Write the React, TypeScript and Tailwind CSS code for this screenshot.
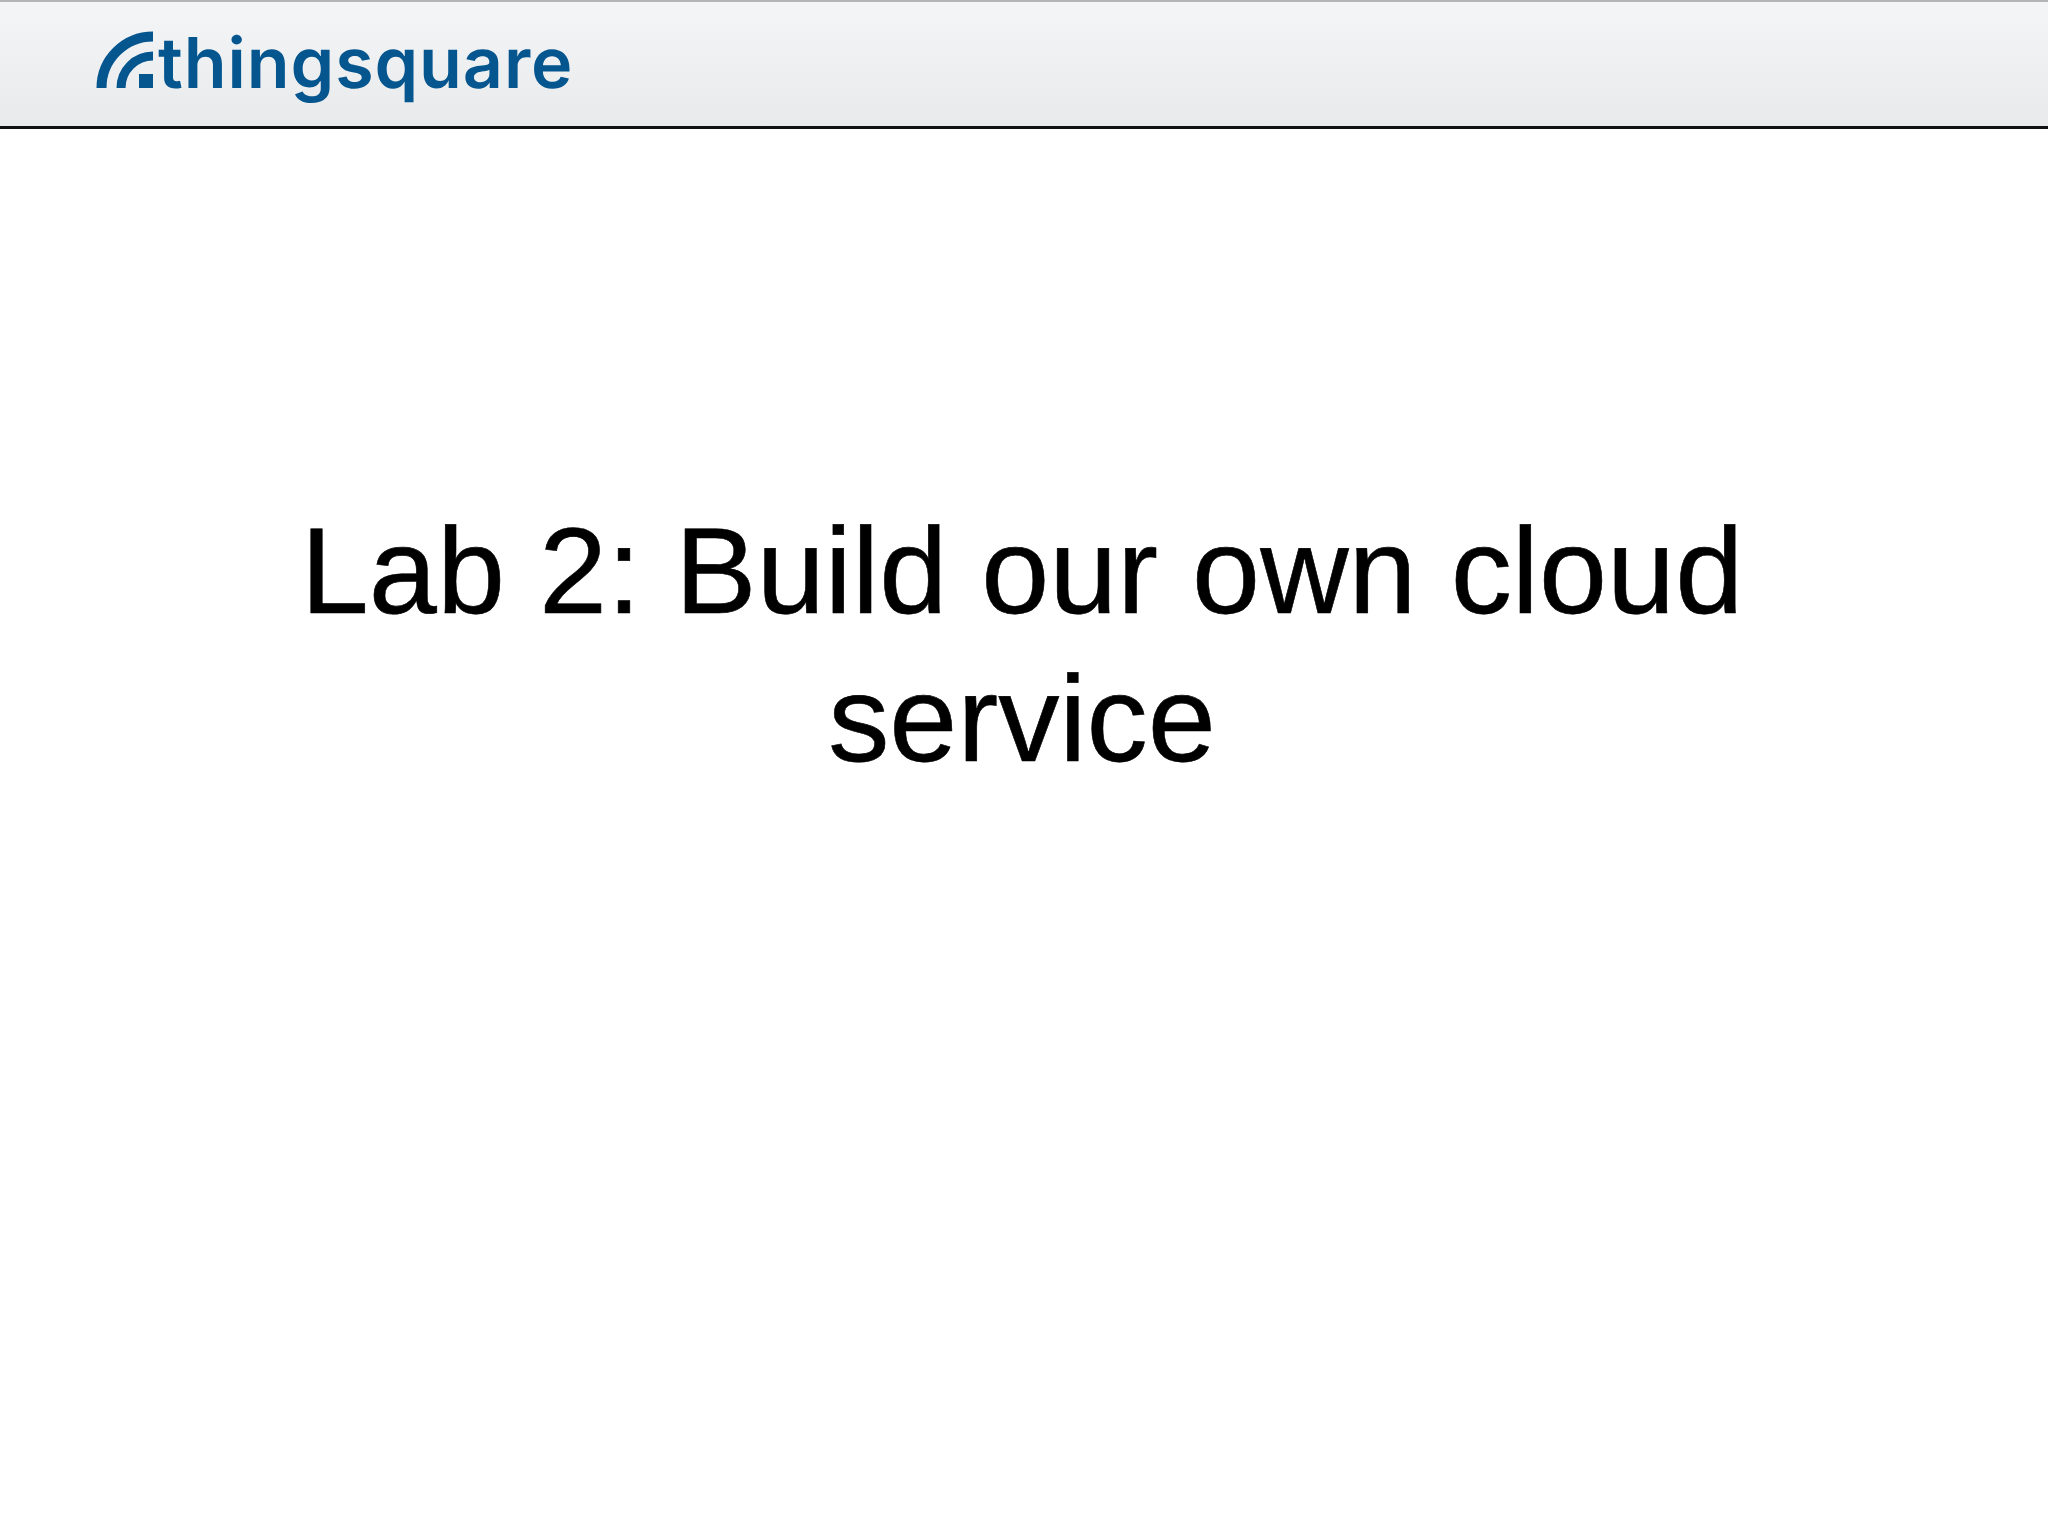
function LogoMark() {
  return (
    <svg width="60" height="60" viewBox="0 0 60 60" className="shrink-0">
      <path d="M5.5 58 A51.5 51.5 0 0 1 57 6.5" fill="none" stroke="#05568f" strokeWidth="10" />
      <path d="M25 58 A32 32 0 0 1 57 26" fill="none" stroke="#05568f" strokeWidth="9" />
      <rect x="43" y="44" width="14" height="14" fill="#05568f" />
    </svg>
  );
}

export default function App() {
  return (
    <div className="min-h-[1536px] bg-white font-['Liberation_Sans',Arial,sans-serif] text-black [text-rendering:geometricPrecision]">
      <header className="h-[129px] border-t-2 border-t-[#b4b5b6] border-b-[3px] border-b-[#111] bg-gradient-to-b from-[#f4f5f6] to-[#e9eaec] pl-[96px] pt-[28px]">
        <div className="flex items-start">
          <LogoMark />
          <span className="ml-[2px] mt-[-9px] font-['Inter',sans-serif] text-[70px] leading-[84px] font-semibold tracking-[0.9px] text-[#05568f]">
            thingsquare
          </span>
        </div>
      </header>
      <main className="pt-[368px] pr-[4px] text-center text-[122.4px] leading-[148px] [-webkit-text-stroke:0.6px_black]">
        <h1>
          Lab 2: Build our own cloud
          <br />
          service
        </h1>
      </main>
    </div>
  );
}
